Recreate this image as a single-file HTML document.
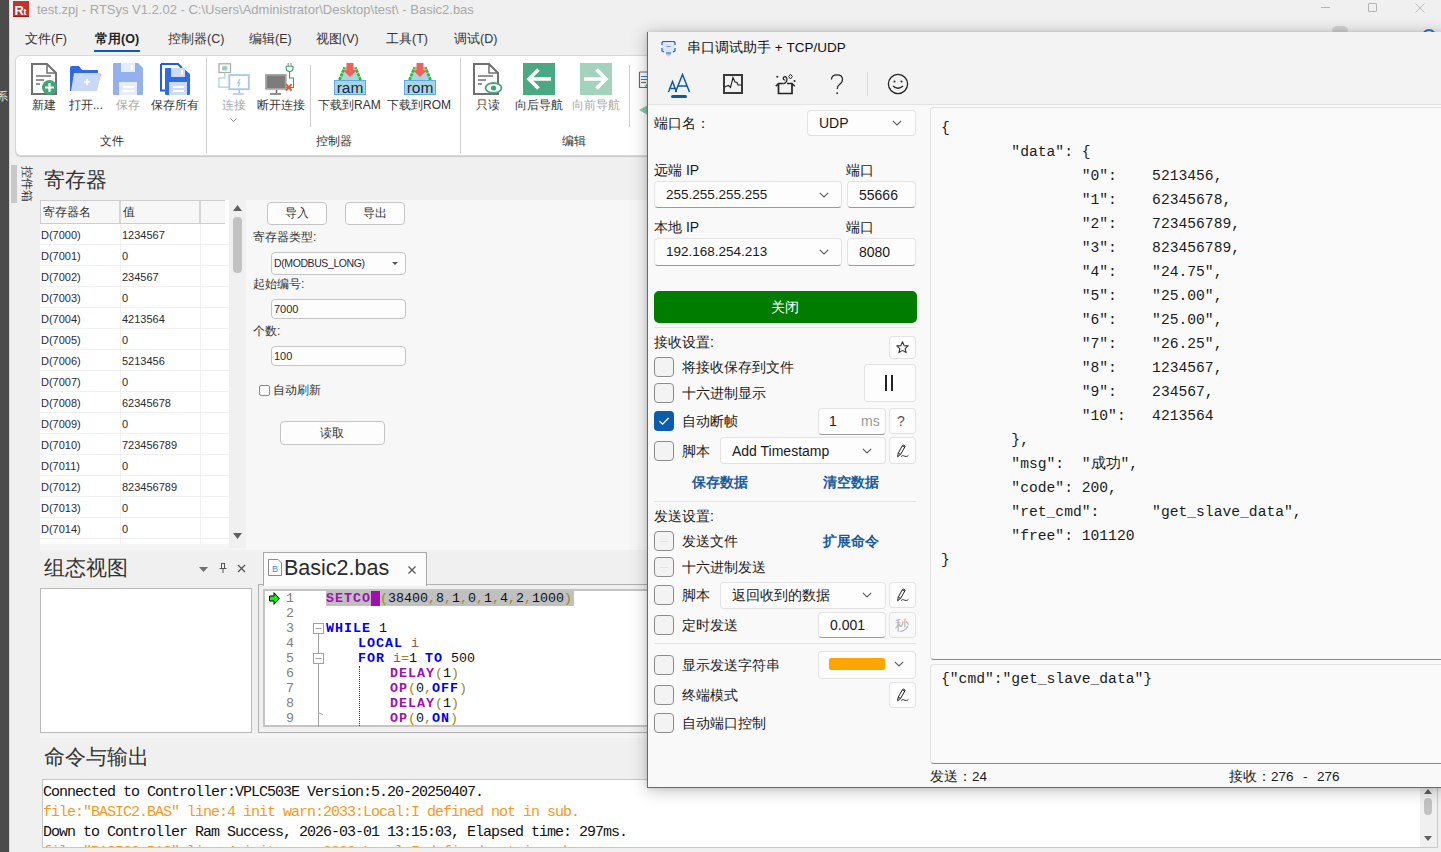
<!DOCTYPE html>
<html><head><meta charset="utf-8">
<style>
*{box-sizing:border-box;margin:0;padding:0}
html,body{width:1441px;height:852px;overflow:hidden}
body{position:relative;background:#f0f0f0;font-family:"Liberation Sans",sans-serif;font-size:12px;color:#1a1a1a}
.a{position:absolute}
.t{position:absolute;white-space:nowrap;line-height:1}
</style></head><body>
<!-- desktop strip -->
<div class="a" style="left:0;top:0;width:9px;height:852px;background:#4b4b4b"></div>
<div class="a" style="left:9px;top:0;width:1px;height:852px;background:#d8d8d8"></div>
<div class="a" style="left:0;top:90px;width:9px;height:14px;overflow:hidden"><div class="t" style="left:-3px;top:1px;font-size:11px;color:#e8e8e8">系</div></div>
<!-- title bar -->
<svg class="a" style="left:13px;top:1px" width="16" height="16" viewBox="0 0 16 16"><rect width="16" height="16" fill="#c8302a"/><rect y="15" width="16" height="1" fill="#9a1a10"/><text x="1.6" y="13.5" font-family="Liberation Sans" font-weight="bold" font-size="13" fill="#fff">R</text><text x="10.6" y="13.5" font-family="Liberation Sans" font-weight="bold" font-size="9" fill="#fff">t</text></svg>
<div class="t" style="left:37px;top:3px;font-size:13px;color:#a8a8a8">test.zpj - RTSys V1.2.02 - C:\Users\Administrator\Desktop\test\ - Basic2.bas</div>
<!-- menu -->
<div class="t" style="left:25px;top:33px;font-size:12.5px;color:#333">文件(F)</div>
<div class="t" style="left:95px;top:33px;font-size:12.5px;color:#222;font-weight:bold">常用(O)</div>
<div class="a" style="left:94px;top:50px;width:46px;height:2px;background:#0b5cb5"></div>
<div class="t" style="left:168px;top:33px;font-size:12.5px;color:#333">控制器(C)</div>
<div class="t" style="left:249px;top:33px;font-size:12.5px;color:#333">编辑(E)</div>
<div class="t" style="left:316px;top:33px;font-size:12.5px;color:#333">视图(V)</div>
<div class="t" style="left:386px;top:33px;font-size:12.5px;color:#333">工具(T)</div>
<div class="t" style="left:454px;top:33px;font-size:12.5px;color:#333">调试(D)</div>
<!-- ribbon -->
<div class="a" style="left:15px;top:55px;width:700px;height:101px;background:#fff;border:1px solid #d9d9d9;border-radius:6px;box-shadow:0 1px 1px #c8c8c8"></div>

<!-- 新建 -->
<svg class="a" style="left:31px;top:63px" width="26" height="32" viewBox="0 0 26 32">
<path d="M1 1H16L25 10V31H1Z" fill="#fff" stroke="#707070" stroke-width="2"/>
<path d="M16 1V10H25" fill="none" stroke="#707070" stroke-width="1.5"/>
<path d="M5 13H20M5 17H13M5 21H9" stroke="#707070" stroke-width="1.6"/>
<circle cx="18.5" cy="24.5" r="7.5" fill="#45a27b"/>
<path d="M18.5 20V29M14 24.5H23" stroke="#fff" stroke-width="2.2"/>
</svg>
<!-- 打开 -->
<svg class="a" style="left:70px;top:66px" width="32" height="26" viewBox="0 0 32 26">
<path d="M0 2Q0 0 2 0H9L12 4H28V10H0Z" fill="#2f6ae0"/>
<path d="M0 2V25H26L31 8H3Z" fill="#2f6ae0"/>
<path d="M4 7H31L27 25H1Z" fill="#c9d8f7"/>
<path d="M17 13V19M14 16H20" stroke="#fff" stroke-width="1.6"/>
</svg>
<!-- 保存 (disabled) -->
<svg class="a" style="left:113px;top:63px" width="30" height="32" viewBox="0 0 30 32">
<path d="M0 1Q0 0 1 0H25L30 5V31Q30 32 29 32H1Q0 32 0 31Z" fill="#94b1ee"/>
<rect x="8" y="0" width="14" height="9" fill="#e5ecfb"/>
<rect x="18" y="2" width="2" height="5" fill="#fff"/>
<rect x="6" y="19" width="18" height="13" fill="#e5ecfb"/>
<path d="M10 24H21M10 28H21" stroke="#fff" stroke-width="1.8"/>
</svg>
<!-- 保存所有 -->
<svg class="a" style="left:160px;top:63px" width="31" height="32" viewBox="0 0 31 32">
<path d="M1 1H18L22 5M1 1V27.5H5" fill="none" stroke="#1e5ee6" stroke-width="2"/>
<path d="M5 6Q5 5 6 5H23L30 11V31Q30 32 29 32H6Q5 32 5 31Z" fill="#2e6be4"/>
<rect x="11" y="5" width="14" height="9" fill="#cddbf7"/>
<rect x="21" y="6.5" width="2" height="5" fill="#fff"/>
<rect x="9" y="19" width="18" height="13" fill="#cddbf7"/>
<path d="M13 24H24M13 28H24" stroke="#fff" stroke-width="1.8"/>
</svg>
<!-- 连接 disabled -->
<svg class="a" style="left:218px;top:63px" width="33" height="32" viewBox="0 0 33 32">
<rect x="1" y="0.8" width="11.5" height="8.7" fill="#fff" stroke="#ababab" stroke-width="1.3"/>
<rect x="4" y="3" width="5.5" height="4.5" rx="1.5" fill="#9ccfb8"/>
<path d="M6.8 9.5V14.8H0.9V24.1H11" fill="none" stroke="#a8d8c0" stroke-width="1.2"/>
<rect x="11.3" y="12" width="19.5" height="14.2" fill="#fff" stroke="#a4c6f0" stroke-width="1.8"/>
<path d="M22 16L19.8 19.8H21.6L20.4 23.4" fill="none" stroke="#a4c6f0" stroke-width="1.3"/>
<path d="M21.2 27V30M14.8 31H25.8" stroke="#a4c6f0" stroke-width="1.6"/>
</svg>
<!-- 断开连接 -->
<svg class="a" style="left:265px;top:63px" width="33" height="32" viewBox="0 0 33 32">
<rect x="1" y="11.9" width="19.8" height="14" fill="#7c7c7c" stroke="#a5a5a5" stroke-width="1.8"/>
<path d="M11.5 27V30M5 31H16" stroke="#6e6e6e" stroke-width="1.6"/>
<path d="M23.2 0V3M26 0V3" stroke="#8a8a8a" stroke-width="1"/>
<path d="M21.2 3.2H28V5.6Q28 8.5 24.6 8.5Q21.2 8.5 21.2 5.6Z" fill="#fff" stroke="#3a9a70" stroke-width="1.1"/>
<path d="M24.6 8.5V15H28.5V24.5H21" fill="none" stroke="#3a9a70" stroke-width="1.1"/>
<path d="M21 21.2L26.5 27.6M26.5 21.2L21 27.6" stroke="#e05a36" stroke-width="1.9"/>
</svg>
<svg class="a" style="left:334px;top:63px" width="32" height="32" viewBox="0 0 32 32">
<path d="M4 17.5L9.5 4H22.5L28 17.5Z" fill="#a8d6dc"/>
<path d="M5.5 17L10.5 4.5M26.5 17L21.5 4.5" stroke="#22c022" stroke-width="2.6" stroke-dasharray="3 1"/>
<path d="M12.5 0H19.5V7H23L16 14L9 7H12.5Z" fill="#f0605c"/>
<rect x="0.5" y="17.5" width="31" height="14" fill="#a8d6dc" stroke="#60a8ee"/>
<text x="16" y="29.5" font-family="Liberation Sans" font-size="15.5" text-anchor="middle" fill="#15294f">ram</text>
</svg><svg class="a" style="left:404px;top:63px" width="32" height="32" viewBox="0 0 32 32">
<path d="M4 17.5L9.5 4H22.5L28 17.5Z" fill="#a8d6dc"/>
<path d="M5.5 17L10.5 4.5M26.5 17L21.5 4.5" stroke="#22c022" stroke-width="2.6" stroke-dasharray="3 1"/>
<path d="M12.5 0H19.5V7H23L16 14L9 7H12.5Z" fill="#f0605c"/>
<rect x="0.5" y="17.5" width="31" height="14" fill="#a8d6dc" stroke="#60a8ee"/>
<text x="16" y="29.5" font-family="Liberation Sans" font-size="15.5" text-anchor="middle" fill="#15294f">rom</text>
</svg>
<!-- 只读 -->
<svg class="a" style="left:473px;top:63px" width="30" height="32" viewBox="0 0 30 32">
<path d="M1 1H16L25 10V31H1Z" fill="#fff" stroke="#707070" stroke-width="2"/>
<path d="M16 1V10H25" fill="none" stroke="#707070" stroke-width="1.5"/>
<path d="M5 13H20M5 17H13M5 21H9" stroke="#707070" stroke-width="1.6"/>
<ellipse cx="20.5" cy="25" rx="8" ry="5" fill="#fff" stroke="#45a27b" stroke-width="1.8"/>
<circle cx="20.5" cy="25" r="2.6" fill="#45a27b"/>
</svg>
<!-- back/forward -->
<svg class="a" style="left:523px;top:63px" width="32" height="32" viewBox="0 0 32 32">
<rect width="32" height="32" fill="#4aa882"/>
<path d="M28 16H6M15.5 6.5L6 16L15.5 25.5" stroke="#fff" stroke-width="3.6" fill="none"/>
</svg>
<svg class="a" style="left:580px;top:63px" width="32" height="32" viewBox="0 0 32 32">
<rect width="32" height="32" fill="#a3d3bd"/>
<path d="M4 16H26M16.5 6.5L26 16L16.5 25.5" stroke="#fff" stroke-width="3.6" fill="none"/>
</svg>
<svg class="a" style="left:638px;top:71px" width="10" height="18" viewBox="0 0 10 18">
<path d="M1.5 1H10M1.5 1V16.5H10" fill="none" stroke="#6a6a6a" stroke-width="1.2"/>
<path d="M3 5.5H10M3 8.5H10" stroke="#3a7ad8" stroke-width="1.1"/><path d="M3 11.5H8" stroke="#6a6a6a" stroke-width="1.1"/>
<path d="M7.5 16.5Q8 13.5 10 13" fill="none" stroke="#2a9a60" stroke-width="1.1"/>
</svg>
<svg class="a" style="left:639px;top:105px" width="9" height="10" viewBox="0 0 9 10"><path d="M0 5L9 0V10Z" fill="#8cc8ac"/></svg>
<!-- labels -->
<div class="t" style="left:32px;top:99px;font-size:12px;color:#333">新建</div>
<div class="t" style="left:69px;top:99px;font-size:12px;color:#333">打开...</div>
<div class="t" style="left:116px;top:99px;font-size:12px;color:#a8a8a8">保存</div>
<div class="t" style="left:151px;top:99px;font-size:12px;color:#333">保存所有</div>
<div class="t" style="left:222px;top:99px;font-size:12px;color:#a8a8a8">连接</div>
<svg class="a" style="left:230px;top:118px" width="7" height="4" viewBox="0 0 7 4"><path d="M0.5 0.5L3.5 3.5L6.5 0.5" fill="none" stroke="#a0a0a0"/></svg>
<div class="t" style="left:257px;top:99px;font-size:12px;color:#333">断开连接</div>
<div class="t" style="left:318px;top:99px;font-size:12px;color:#333">下载到RAM</div>
<div class="t" style="left:387px;top:99px;font-size:12px;color:#333">下载到ROM</div>
<div class="t" style="left:476px;top:99px;font-size:12px;color:#333">只读</div>
<div class="t" style="left:515px;top:99px;font-size:12px;color:#333">向后导航</div>
<div class="t" style="left:572px;top:99px;font-size:12px;color:#a8a8a8">向前导航</div>
<div class="t" style="left:100px;top:135px;font-size:12px;color:#333">文件</div>
<div class="t" style="left:316px;top:135px;font-size:12px;color:#333">控制器</div>
<div class="t" style="left:562px;top:135px;font-size:12px;color:#333">编辑</div>
<!-- separators -->
<div class="a" style="left:206px;top:58px;width:1px;height:95px;background:#cfcfcf"></div>
<div class="a" style="left:310px;top:65px;width:1px;height:62px;background:#cfcfcf"></div>
<div class="a" style="left:460px;top:58px;width:1px;height:95px;background:#cfcfcf"></div>
<div class="a" style="left:629px;top:65px;width:1px;height:62px;background:#cfcfcf"></div>


<!-- side tab -->
<div class="a" style="left:11px;top:165px;width:6px;height:38px;background:#c8c8c8"></div>
<div class="a" style="left:20px;top:166px;width:14px;height:38px;writing-mode:vertical-rl;text-orientation:sideways;font-size:12px;line-height:14px;color:#333">控件箱</div>
<div class="t" style="left:44px;top:169px;font-size:21px;color:#333">寄存器</div>
<!-- register table -->
<div class="a" style="left:40px;top:200px;width:206px;height:350px;background:#f5f5f5"></div>
<div class="a" style="left:40px;top:200px;width:189px;height:344px;background:#fff;overflow:hidden">
<div class="a" style="left:0;top:0;width:185px;height:24px;background:#f7f7f7;border:1px solid #cdcdcd;border-right:none"></div>
<div class="a" style="left:79px;top:1px;width:2px;height:22px;background:#d6d6d6"></div>
<div class="a" style="left:159px;top:1px;width:2px;height:22px;background:#d6d6d6"></div>
<div class="t" style="left:3px;top:6px;font-size:12px;color:#333">寄存器名</div>
<div class="t" style="left:83px;top:6px;font-size:12px;color:#333">值</div>
<div class="a" style="left:0;top:24px;width:189px;height:21px;border-bottom:1px solid #f0f0f0"></div><div class="t" style="left:1px;top:30px;font-size:11px;color:#2a2a40">D(7000)</div><div class="t" style="left:82px;top:30px;font-size:11px;color:#2a2a2a">1234567</div><div class="a" style="left:0;top:45px;width:189px;height:21px;border-bottom:1px solid #f0f0f0"></div><div class="t" style="left:1px;top:51px;font-size:11px;color:#2a2a40">D(7001)</div><div class="t" style="left:82px;top:51px;font-size:11px;color:#2a2a2a">0</div><div class="a" style="left:0;top:66px;width:189px;height:21px;border-bottom:1px solid #f0f0f0"></div><div class="t" style="left:1px;top:72px;font-size:11px;color:#2a2a40">D(7002)</div><div class="t" style="left:82px;top:72px;font-size:11px;color:#2a2a2a">234567</div><div class="a" style="left:0;top:87px;width:189px;height:21px;border-bottom:1px solid #f0f0f0"></div><div class="t" style="left:1px;top:93px;font-size:11px;color:#2a2a40">D(7003)</div><div class="t" style="left:82px;top:93px;font-size:11px;color:#2a2a2a">0</div><div class="a" style="left:0;top:108px;width:189px;height:21px;border-bottom:1px solid #f0f0f0"></div><div class="t" style="left:1px;top:114px;font-size:11px;color:#2a2a40">D(7004)</div><div class="t" style="left:82px;top:114px;font-size:11px;color:#2a2a2a">4213564</div><div class="a" style="left:0;top:129px;width:189px;height:21px;border-bottom:1px solid #f0f0f0"></div><div class="t" style="left:1px;top:135px;font-size:11px;color:#2a2a40">D(7005)</div><div class="t" style="left:82px;top:135px;font-size:11px;color:#2a2a2a">0</div><div class="a" style="left:0;top:150px;width:189px;height:21px;border-bottom:1px solid #f0f0f0"></div><div class="t" style="left:1px;top:156px;font-size:11px;color:#2a2a40">D(7006)</div><div class="t" style="left:82px;top:156px;font-size:11px;color:#2a2a2a">5213456</div><div class="a" style="left:0;top:171px;width:189px;height:21px;border-bottom:1px solid #f0f0f0"></div><div class="t" style="left:1px;top:177px;font-size:11px;color:#2a2a40">D(7007)</div><div class="t" style="left:82px;top:177px;font-size:11px;color:#2a2a2a">0</div><div class="a" style="left:0;top:192px;width:189px;height:21px;border-bottom:1px solid #f0f0f0"></div><div class="t" style="left:1px;top:198px;font-size:11px;color:#2a2a40">D(7008)</div><div class="t" style="left:82px;top:198px;font-size:11px;color:#2a2a2a">62345678</div><div class="a" style="left:0;top:213px;width:189px;height:21px;border-bottom:1px solid #f0f0f0"></div><div class="t" style="left:1px;top:219px;font-size:11px;color:#2a2a40">D(7009)</div><div class="t" style="left:82px;top:219px;font-size:11px;color:#2a2a2a">0</div><div class="a" style="left:0;top:234px;width:189px;height:21px;border-bottom:1px solid #f0f0f0"></div><div class="t" style="left:1px;top:240px;font-size:11px;color:#2a2a40">D(7010)</div><div class="t" style="left:82px;top:240px;font-size:11px;color:#2a2a2a">723456789</div><div class="a" style="left:0;top:255px;width:189px;height:21px;border-bottom:1px solid #f0f0f0"></div><div class="t" style="left:1px;top:261px;font-size:11px;color:#2a2a40">D(7011)</div><div class="t" style="left:82px;top:261px;font-size:11px;color:#2a2a2a">0</div><div class="a" style="left:0;top:276px;width:189px;height:21px;border-bottom:1px solid #f0f0f0"></div><div class="t" style="left:1px;top:282px;font-size:11px;color:#2a2a40">D(7012)</div><div class="t" style="left:82px;top:282px;font-size:11px;color:#2a2a2a">823456789</div><div class="a" style="left:0;top:297px;width:189px;height:21px;border-bottom:1px solid #f0f0f0"></div><div class="t" style="left:1px;top:303px;font-size:11px;color:#2a2a40">D(7013)</div><div class="t" style="left:82px;top:303px;font-size:11px;color:#2a2a2a">0</div><div class="a" style="left:0;top:318px;width:189px;height:21px;border-bottom:1px solid #f0f0f0"></div><div class="t" style="left:1px;top:324px;font-size:11px;color:#2a2a40">D(7014)</div><div class="t" style="left:82px;top:324px;font-size:11px;color:#2a2a2a">0</div><div class="a" style="left:0;top:339px;width:189px;height:21px;border-bottom:1px solid #f0f0f0"></div><div class="t" style="left:1px;top:345px;font-size:11px;color:#2a2a40">D(7015)</div><div class="t" style="left:82px;top:345px;font-size:11px;color:#2a2a2a">0</div>
<div class="a" style="left:80px;top:24px;width:1px;height:330px;background:#f0f0f0"></div>
<div class="a" style="left:160px;top:24px;width:1px;height:330px;background:#f0f0f0"></div>
</div>
<!-- scrollbar -->
<div class="a" style="left:229px;top:200px;width:17px;height:348px;background:#f0f0f0"></div>
<svg class="a" style="left:233px;top:205px" width="9" height="6" viewBox="0 0 9 6"><path d="M0 6L4.5 0L9 6Z" fill="#606060"/></svg>
<div class="a" style="left:233px;top:217px;width:9px;height:56px;background:#c2c2c2;border-radius:4px"></div>
<svg class="a" style="left:233px;top:533px" width="9" height="6" viewBox="0 0 9 6"><path d="M0 0L4.5 6L9 0Z" fill="#606060"/></svg>
<!-- right pane -->
<div class="a" style="left:246px;top:200px;width:402px;height:350px;background:#f7f7f7"></div>
<div class="a" style="left:267px;top:202px;width:60px;height:23px;background:#fdfdfd;border:1px solid #c4c4c4;border-radius:4px"></div>
<div class="t" style="left:285px;top:207px;font-size:12px;color:#333">导入</div>
<div class="a" style="left:345px;top:202px;width:60px;height:23px;background:#fdfdfd;border:1px solid #c4c4c4;border-radius:4px"></div>
<div class="t" style="left:363px;top:207px;font-size:12px;color:#333">导出</div>
<div class="t" style="left:253px;top:231px;font-size:12px;color:#333">寄存器类型:</div>
<div class="a" style="left:271px;top:252px;width:135px;height:23px;background:#fdfdfd;border:1px solid #c4c4c4;border-radius:4px"></div>
<div class="t" style="left:274px;top:258px;font-size:10.5px;letter-spacing:-0.4px;color:#2a2a40">D(MODBUS_LONG)</div>
<svg class="a" style="left:392px;top:262px" width="6" height="3" viewBox="0 0 6 3"><path d="M0 0H6L3 3Z" fill="#555"/></svg>
<div class="t" style="left:253px;top:278px;font-size:12px;color:#333">起始编号:</div>
<div class="a" style="left:271px;top:299px;width:135px;height:20px;background:#fdfdfd;border:1px solid #c4c4c4;border-radius:4px"></div>
<div class="t" style="left:274px;top:304px;font-size:11px;color:#2a2a2a">7000</div>
<div class="t" style="left:253px;top:325px;font-size:12px;color:#333">个数:</div>
<div class="a" style="left:271px;top:346px;width:135px;height:20px;background:#fdfdfd;border:1px solid #c4c4c4;border-radius:4px"></div>
<div class="t" style="left:274px;top:351px;font-size:11px;color:#2a2a2a">100</div>
<div class="a" style="left:259px;top:385px;width:11px;height:11px;background:#fff;border:1px solid #8a8a8a;border-radius:2px"></div>
<div class="t" style="left:273px;top:384px;font-size:12px;color:#333">自动刷新</div>
<div class="a" style="left:280px;top:421px;width:105px;height:24px;background:#fdfdfd;border:1px solid #c4c4c4;border-radius:4px"></div>
<div class="t" style="left:320px;top:427px;font-size:12px;color:#333">读取</div>
<!-- bottom panes -->
<div class="t" style="left:44px;top:557px;font-size:21px;color:#333">组态视图</div>
<svg class="a" style="left:199px;top:567px" width="9" height="5" viewBox="0 0 9 5"><path d="M0 0H9L4.5 5Z" fill="#707070"/></svg>
<svg class="a" style="left:219px;top:563px" width="8" height="10" viewBox="0 0 8 10"><path d="M2 0.5H6M2.5 0.5V5M5.5 0.5V5M0.5 5.5H7.5M4 5.5V10" stroke="#555" fill="none"/></svg>
<svg class="a" style="left:237px;top:564px" width="9" height="9" viewBox="0 0 9 9"><path d="M1 1L8 8M8 1L1 8" stroke="#555" stroke-width="1.3"/></svg>
<div class="a" style="left:40px;top:588px;width:212px;height:145px;background:#fff;border:1px solid #b9b9b9"></div>
<!-- editor -->
<div class="a" style="left:258px;top:584px;width:400px;height:149px;background:#f0f0f0;border:1px solid #b0b0b0"></div>
<div class="a" style="left:263px;top:589px;width:400px;height:138px;background:#fff;border:2px solid #c4c4c4;border-right:none"></div>
<div class="a" style="left:263px;top:552px;width:164px;height:34px;background:#fcfcfc;border:1px solid #a9a9a9;border-bottom:none"></div>
<svg class="a" style="left:268px;top:559px" width="14" height="17" viewBox="0 0 14 17"><path d="M0.5 0.5H10L13.5 4V16.5H0.5Z" fill="#fff" stroke="#8a8a8a"/><text x="7" y="13" font-family="Liberation Sans" font-size="9" fill="#3a8ad8" text-anchor="middle">B</text></svg>
<div class="t" style="left:284px;top:558px;font-size:21.5px;color:#2a2a2a">Basic2.bas</div>
<svg class="a" style="left:408px;top:566px" width="8" height="8" viewBox="0 0 8 8"><path d="M0.5 0.5L7.5 7.5M7.5 0.5L0.5 7.5" stroke="#555" stroke-width="1.2"/></svg>
<div class="a" style="left:265px;top:591px;width:383px;height:136px;overflow:hidden"><div class="a" style="left:61px;top:0;width:248px;height:15px;background:#c0c0c0"></div><svg class="a" style="left:4px;top:1px" width="11" height="13" viewBox="0 0 11 13"><path d="M0.5 4H5V0.7L10.3 6.5L5 12.3V9H0.5Z" fill="#22e022" stroke="#000" stroke-width="1"/></svg><svg class="a" style="left:48px;top:32px" width="11" height="105" viewBox="0 0 11 105"><rect x="0.5" y="0.5" width="10" height="10" fill="#fff" stroke="#a0a0a0"/><path d="M2.5 5.5H8.5" stroke="#a0a0a0"/><path d="M5.5 11V30" stroke="#a0a0a0"/><rect x="0.5" y="30.5" width="10" height="10" fill="#fff" stroke="#a0a0a0"/><path d="M2.5 35.5H8.5" stroke="#a0a0a0"/><path d="M5.5 41V105" stroke="#a0a0a0"/><path d="M6 90Q8 90 10 92" stroke="#a0a0a0" fill="none"/></svg><div class="a" style="left:94px;top:75px;width:0;height:62px;border-left:1px dotted #333"></div><div class="t" style="left:21px;top:0px;height:15px;line-height:15px;font-family:'Liberation Mono',monospace;font-size:13.33px;color:#808080">1</div><div class="t" style="left:61px;top:0px;height:15px;line-height:15px;font-family:'Liberation Mono',monospace;font-size:13.33px;color:#111;white-space:pre"><b style="color:#a010b0;letter-spacing:1px">SETCO<span style="background:#a010b0">M</span></b><span style="color:#9a8a10">(</span>38400<span style="color:#9a8a10">,</span>8<span style="color:#9a8a10">,</span>1<span style="color:#9a8a10">,</span>0<span style="color:#9a8a10">,</span>1<span style="color:#9a8a10">,</span>4<span style="color:#9a8a10">,</span>2<span style="color:#9a8a10">,</span>1000<span style="color:#9a8a10">)</span></div><div class="t" style="left:21px;top:15px;height:15px;line-height:15px;font-family:'Liberation Mono',monospace;font-size:13.33px;color:#808080">2</div><div class="t" style="left:21px;top:30px;height:15px;line-height:15px;font-family:'Liberation Mono',monospace;font-size:13.33px;color:#808080">3</div><div class="t" style="left:61px;top:30px;height:15px;line-height:15px;font-family:'Liberation Mono',monospace;font-size:13.33px;color:#111;white-space:pre"><b style="color:#0000f0;letter-spacing:1px">WHILE</b> 1</div><div class="t" style="left:21px;top:45px;height:15px;line-height:15px;font-family:'Liberation Mono',monospace;font-size:13.33px;color:#808080">4</div><div class="t" style="left:61px;top:45px;height:15px;line-height:15px;font-family:'Liberation Mono',monospace;font-size:13.33px;color:#111;white-space:pre">    <b style="color:#0000f0;letter-spacing:1px">LOCAL</b> <span style="color:#8a5a5a">i</span></div><div class="t" style="left:21px;top:60px;height:15px;line-height:15px;font-family:'Liberation Mono',monospace;font-size:13.33px;color:#808080">5</div><div class="t" style="left:61px;top:60px;height:15px;line-height:15px;font-family:'Liberation Mono',monospace;font-size:13.33px;color:#111;white-space:pre">    <b style="color:#0000f0;letter-spacing:1px">FOR</b> <span style="color:#8a5a5a">i</span><span style="color:#9a8a10">=</span>1 <b style="color:#0000f0;letter-spacing:1px">TO</b> 500</div><div class="t" style="left:21px;top:75px;height:15px;line-height:15px;font-family:'Liberation Mono',monospace;font-size:13.33px;color:#808080">6</div><div class="t" style="left:61px;top:75px;height:15px;line-height:15px;font-family:'Liberation Mono',monospace;font-size:13.33px;color:#111;white-space:pre">        <b style="color:#a010b0;letter-spacing:1px">DELAY</b><span style="color:#9a8a10">(</span>1<span style="color:#9a8a10">)</span></div><div class="t" style="left:21px;top:90px;height:15px;line-height:15px;font-family:'Liberation Mono',monospace;font-size:13.33px;color:#808080">7</div><div class="t" style="left:61px;top:90px;height:15px;line-height:15px;font-family:'Liberation Mono',monospace;font-size:13.33px;color:#111;white-space:pre">        <b style="color:#a010b0;letter-spacing:1px">OP</b><span style="color:#9a8a10">(</span>0<span style="color:#9a8a10">,</span><b style="color:#0000f0;letter-spacing:1px">OFF</b><span style="color:#9a8a10">)</span></div><div class="t" style="left:21px;top:105px;height:15px;line-height:15px;font-family:'Liberation Mono',monospace;font-size:13.33px;color:#808080">8</div><div class="t" style="left:61px;top:105px;height:15px;line-height:15px;font-family:'Liberation Mono',monospace;font-size:13.33px;color:#111;white-space:pre">        <b style="color:#a010b0;letter-spacing:1px">DELAY</b><span style="color:#9a8a10">(</span>1<span style="color:#9a8a10">)</span></div><div class="t" style="left:21px;top:120px;height:15px;line-height:15px;font-family:'Liberation Mono',monospace;font-size:13.33px;color:#808080">9</div><div class="t" style="left:61px;top:120px;height:15px;line-height:15px;font-family:'Liberation Mono',monospace;font-size:13.33px;color:#111;white-space:pre">        <b style="color:#a010b0;letter-spacing:1px">OP</b><span style="color:#9a8a10">(</span>0<span style="color:#9a8a10">,</span><b style="color:#0000f0;letter-spacing:1px">ON</b><span style="color:#9a8a10">)</span></div></div>
<!-- console -->
<div class="a" style="left:40px;top:734px;width:608px;height:4px;background:#f5f5f5"></div>
<div class="t" style="left:44px;top:746px;font-size:21px;color:#333">命令与输出</div>
<div class="a" style="left:42px;top:779px;width:1396px;height:69px;background:#fff;border:1px solid #c8c8c8;overflow:hidden">
<pre style="position:absolute;left:0px;top:3px;font-family:'Liberation Mono',monospace;font-size:15px;letter-spacing:-1px;line-height:20px;color:#111">Connected to Controller:VPLC503E Version:5.20-20250407.
<span style="color:#f39a1e">file:"BASIC2.BAS" line:4 init warn:2033:Local:I defined not in sub.</span>
Down to Controller Ram Success, 2026-03-01 13:15:03, Elapsed time: 297ms.
<span style="color:#f39a1e">file:"BASIC2.BAS" line:4 init warn:2033:Local:I defined not in sub.</span></pre>
</div>
<div class="a" style="left:1420px;top:780px;width:17px;height:67px;background:#f0f0f0"></div>
<svg class="a" style="left:1424px;top:789px" width="8" height="5" viewBox="0 0 8 5"><path d="M0 5L4 0L8 5Z" fill="#606060"/></svg>
<div class="a" style="left:1424px;top:798px;width:8px;height:17px;background:#c2c2c2;border-radius:4px"></div>
<svg class="a" style="left:1424px;top:836px" width="8" height="5" viewBox="0 0 8 5"><path d="M0 0L4 5L8 0Z" fill="#606060"/></svg>

<div class="a" style="left:1321px;top:7px;width:9px;height:1px;background:#b4b4b4"></div>
<div class="a" style="left:1368px;top:3px;width:9px;height:9px;border:1px solid #b4b4b4;border-radius:1px"></div>
<svg class="a" style="left:1415px;top:3px" width="10" height="10" viewBox="0 0 10 10"><path d="M0.5 0.5L9.5 9.5M9.5 0.5L0.5 9.5" stroke="#b4b4b4" stroke-width="0.9"/></svg>
<div class="a" style="left:1332px;top:26px;width:16px;height:10px;background:#d2d2d2;border-radius:5px"></div>
<div class="a" style="left:1422px;top:29px;width:14px;height:14px;border:2px solid #2a78d0;border-radius:50%"></div>
<!-- serial window -->
<div class="a" style="left:647px;top:32px;width:800px;height:756px;background:#f9f9f9;border-left:1px solid #6a6a6a;border-bottom:1px solid #6a6a6a;box-shadow:0 0 4px rgba(0,0,0,0.12),0 2px 16px rgba(0,0,0,0.26)"></div>
<div class="a" style="left:648px;top:32px;width:793px;height:72px;background:#f3f3f3"></div>
<div class="a" style="left:648px;top:104px;width:793px;height:1px;background:#e3e3e3"></div>
<svg class="a" style="left:661px;top:40px" width="15" height="17" viewBox="0 0 15 17">
<path d="M2 1.5H13L14 2.5V11L12 12.5H3L1 11V2.5Z" fill="#dde7f8"/>
<path d="M1 5V2.5L2 1.5H13L14 2.5V5M1 8V11L3 12M14 8V11L12 12" fill="none" stroke="#2a5ab8" stroke-width="1.2"/>
<path d="M5.5 6.5H9.5" stroke="#7090d0" stroke-width="1"/>
<rect x="5" y="12" width="5" height="2.5" fill="#7a9ad8"/>
<path d="M5.5 14.5H9.5L7.5 16.8Z" fill="#b8c8f0"/>
</svg>
<div class="t" style="left:687px;top:41px;font-size:13.5px;color:#111">串口调试助手 + TCP/UDP</div>
<!-- toolbar icons -->
<svg class="a" style="left:667px;top:73px" width="24" height="26" viewBox="0 0 24 26">
<path d="M1.5 19L5.5 8.5L9.5 19M2.8 15.5H8.2" fill="none" stroke="#0a5aa8" stroke-width="1.5"/>
<path d="M8.5 19L15.5 1.5L22.5 19M11 13H20" fill="none" stroke="#0a5aa8" stroke-width="1.5"/>
<rect x="4" y="22" width="16" height="3" rx="1.5" fill="#0a5aa8"/>
</svg>
<svg class="a" style="left:723px;top:74px" width="20" height="20" viewBox="0 0 20 20">
<rect x="1" y="1" width="18" height="18" fill="none" stroke="#3a3a3a" stroke-width="2"/>
<path d="M1.5 13L4 12L5.5 11.5L7.5 13.5L10 3.5L12 8L14 8.5L15 11L18.5 11" fill="none" stroke="#222" stroke-width="1.1"/>
</svg>
<svg class="a" style="left:775px;top:74px" width="22" height="21" viewBox="0 0 22 21">
<path d="M3.5 10V19.5H17V10" fill="none" stroke="#222" stroke-width="1.7"/>
<path d="M0.8 12.2L3.5 9.5H8.5M12 9.5H17L19.7 12.2" fill="none" stroke="#222" stroke-width="1.5"/>
<path d="M8.5 10Q12.8 8 11.8 4.2Q10.6 1.6 8.6 3.2Q7.4 5.8 10.2 6.2" fill="none" stroke="#222" stroke-width="1.3"/>
<path d="M15.5 0.3L17.4 2.6L15.5 4.9L13.6 2.6Z" fill="none" stroke="#222" stroke-width="1"/>
<circle cx="2.3" cy="2.8" r="1" fill="#222"/><circle cx="19.5" cy="7" r="1" fill="#222"/>
</svg>
<svg class="a" style="left:830px;top:74px" width="15" height="21" viewBox="0 0 15 21">
<path d="M1.5 5.5Q1.5 0.8 7 0.8Q12.5 0.8 12.5 5.5Q12.5 8.5 9.5 10.5Q7.2 12 7.2 15" fill="none" stroke="#222" stroke-width="1.2"/>
<circle cx="7.2" cy="19.2" r="0.9" fill="#222"/>
</svg>
<div class="a" style="left:867px;top:72px;width:1px;height:24px;background:#dcdcdc"></div>
<svg class="a" style="left:887px;top:73px" width="22" height="22" viewBox="0 0 22 22">
<circle cx="11" cy="11" r="9.6" fill="none" stroke="#222" stroke-width="1.3"/>
<circle cx="7.5" cy="8.5" r="1" fill="#222"/><circle cx="14.5" cy="8.5" r="1" fill="#222"/>
<path d="M6 13Q11 17.5 16 13" fill="none" stroke="#222" stroke-width="1.2"/>
</svg>
<div class="t" style="left:654px;top:116px;height:14px;line-height:14px;font-size:14px;color:#1a1a1a">端口名：</div><div class="a" style="left:807px;top:110px;width:109px;height:26px;background:#fdfdfd;border:1px solid #e3e3e3;border-bottom-color:#e0e0e0;border-radius:4px"></div><div class="t" style="left:819px;top:116px;height:14px;line-height:14px;font-size:14px;color:#1a1a1a">UDP</div><svg class="a" style="left:892px;top:120px" width="10" height="6" viewBox="0 0 10 6"><path d="M0.8 0.8L5 5L9.2 0.8" fill="none" stroke="#5a5a5a" stroke-width="1.1"/></svg><div class="t" style="left:654px;top:163px;height:14px;line-height:14px;font-size:14px;color:#1a1a1a">远端 IP</div><div class="t" style="left:846px;top:163px;height:14px;line-height:14px;font-size:14px;color:#1a1a1a">端口</div><div class="a" style="left:654px;top:181px;width:188px;height:27px;background:#fdfdfd;border:1px solid #e3e3e3;border-bottom-color:#9a9a9a;border-radius:4px"></div><div class="t" style="left:666px;top:188px;height:14px;line-height:14px;font-size:13.5px;color:#1a1a1a">255.255.255.255</div><svg class="a" style="left:819px;top:192px" width="10" height="6" viewBox="0 0 10 6"><path d="M0.8 0.8L5 5L9.2 0.8" fill="none" stroke="#5a5a5a" stroke-width="1.1"/></svg><div class="a" style="left:847px;top:181px;width:69px;height:27px;background:#fdfdfd;border:1px solid #e3e3e3;border-bottom-color:#9a9a9a;border-radius:4px"></div><div class="t" style="left:859px;top:188px;height:14px;line-height:14px;font-size:14px;color:#1a1a1a">55666</div><div class="t" style="left:654px;top:220px;height:14px;line-height:14px;font-size:14px;color:#1a1a1a">本地 IP</div><div class="t" style="left:846px;top:220px;height:14px;line-height:14px;font-size:14px;color:#1a1a1a">端口</div><div class="a" style="left:654px;top:238px;width:188px;height:28px;background:#fdfdfd;border:1px solid #e3e3e3;border-bottom-color:#9a9a9a;border-radius:4px"></div><div class="t" style="left:666px;top:245px;height:14px;line-height:14px;font-size:13.5px;color:#1a1a1a">192.168.254.213</div><svg class="a" style="left:819px;top:249px" width="10" height="6" viewBox="0 0 10 6"><path d="M0.8 0.8L5 5L9.2 0.8" fill="none" stroke="#5a5a5a" stroke-width="1.1"/></svg><div class="a" style="left:847px;top:238px;width:69px;height:28px;background:#fdfdfd;border:1px solid #e3e3e3;border-bottom-color:#9a9a9a;border-radius:4px"></div><div class="t" style="left:859px;top:245px;height:14px;line-height:14px;font-size:14px;color:#1a1a1a">8080</div><div class="a" style="left:654px;top:291px;width:263px;height:32px;background:#007c00;border-radius:5px"></div><div class="t" style="left:771px;top:300px;height:14px;line-height:14px;font-size:14px;color:#fff">关闭</div><div class="a" style="left:654px;top:327px;width:262px;height:1px;background:#e3e3e3"></div><div class="t" style="left:654px;top:335px;height:14px;line-height:14px;font-size:14px;color:#1a1a1a">接收设置:</div><div class="a" style="left:889px;top:336px;width:27px;height:23px;background:#fdfdfd;border:1px solid #e3e3e3;border-bottom-color:#e0e0e0;border-radius:4px"></div><svg class="a" style="left:896px;top:341px" width="13" height="13" viewBox="0 0 13 13"><path d="M6.5 0.8L8.1 4.6L12.2 4.9L9.1 7.6L10.1 11.6L6.5 9.4L2.9 11.6L3.9 7.6L0.8 4.9L4.9 4.6Z" fill="none" stroke="#333" stroke-width="1.1" stroke-linejoin="round"/></svg><div class="a" style="left:864px;top:364px;width:52px;height:38px;background:#fdfdfd;border:1px solid #e3e3e3;border-bottom-color:#e0e0e0;border-radius:4px"></div><div class="a" style="left:885px;top:375px;width:2px;height:16px;background:#222"></div><div class="a" style="left:891px;top:375px;width:2px;height:16px;background:#222"></div><div class="a" style="left:654px;top:357px;width:20px;height:20px;background:#f3f3f3;border:1px solid #8c8c8c;border-radius:4px"></div><div class="t" style="left:682px;top:360px;height:14px;line-height:14px;font-size:14px;color:#1a1a1a">将接收保存到文件</div><div class="a" style="left:654px;top:383px;width:20px;height:20px;background:#f3f3f3;border:1px solid #8c8c8c;border-radius:4px"></div><div class="t" style="left:682px;top:386px;height:14px;line-height:14px;font-size:14px;color:#1a1a1a">十六进制显示</div><div class="a" style="left:654px;top:411px;width:20px;height:20px;background:#0b5cab;border-radius:4px"></div><svg class="a" style="left:654px;top:411px" width="20" height="20" viewBox="0 0 20 20"><path d="M5.5 10.2L8.6 13.2L14.6 7" fill="none" stroke="#fff" stroke-width="1.3"/></svg><div class="t" style="left:682px;top:414px;height:14px;line-height:14px;font-size:14px;color:#1a1a1a">自动断帧</div><div class="a" style="left:818px;top:408px;width:68px;height:27px;background:#fdfdfd;border:1px solid #e3e3e3;border-bottom-color:#9a9a9a;border-radius:4px"></div><div class="t" style="left:829px;top:414px;height:14px;line-height:14px;font-size:14px;color:#1a1a1a">1</div><div class="t" style="left:861px;top:414px;height:14px;line-height:14px;font-size:14px;color:#9a9a9a">ms</div><div class="a" style="left:889px;top:408px;width:27px;height:26px;background:#fdfdfd;border:1px solid #e3e3e3;border-bottom-color:#e0e0e0;border-radius:4px"></div><div class="t" style="left:897px;top:414px;height:14px;line-height:14px;font-size:14px;color:#555">?</div><div class="a" style="left:654px;top:441px;width:20px;height:20px;background:#f3f3f3;border:1px solid #8c8c8c;border-radius:4px"></div><div class="t" style="left:682px;top:444px;height:14px;line-height:14px;font-size:14px;color:#1a1a1a">脚本</div><div class="a" style="left:720px;top:437px;width:166px;height:27px;background:#fdfdfd;border:1px solid #e3e3e3;border-bottom-color:#e0e0e0;border-radius:4px"></div><div class="t" style="left:732px;top:444px;height:14px;line-height:14px;font-size:14px;color:#1a1a1a">Add Timestamp</div><svg class="a" style="left:862px;top:448px" width="10" height="6" viewBox="0 0 10 6"><path d="M0.8 0.8L5 5L9.2 0.8" fill="none" stroke="#5a5a5a" stroke-width="1.1"/></svg><div class="a" style="left:889px;top:437px;width:27px;height:27px;background:#fdfdfd;border:1px solid #e3e3e3;border-bottom-color:#e0e0e0;border-radius:4px"></div><svg class="a" style="left:896px;top:444px" width="14" height="14" viewBox="0 0 14 14"><path d="M1.6 12.8L2.2 9.2L6.4 1.8Q7.4 0.6 8.6 1.6Q9.2 2.4 8.8 3L4.6 10.4L1.6 12.8M2.2 9.2L4.6 10.4M6.4 1.8L8.8 3" fill="none" stroke="#222" stroke-width="1"/><path d="M5 12.6Q6.2 11.2 7.6 11.8Q9 12.6 10.4 12.4Q11.6 12.3 12.4 11.4" fill="none" stroke="#222" stroke-width="0.9"/></svg><div class="t" style="left:692px;top:475px;height:14px;line-height:14px;font-size:14px;font-weight:600;color:#1b5c9c">保存数据</div><div class="t" style="left:823px;top:475px;height:14px;line-height:14px;font-size:14px;font-weight:600;color:#1b5c9c">清空数据</div><div class="a" style="left:654px;top:501px;width:262px;height:1px;background:#e3e3e3"></div><div class="t" style="left:654px;top:509px;height:14px;line-height:14px;font-size:14px;color:#1a1a1a">发送设置:</div><div class="a" style="left:654px;top:531px;width:20px;height:20px;background:#f3f3f3;border:1px solid #8c8c8c;border-radius:4px"></div><div class="a" style="left:660px;top:541px;width:8px;height:1px;background:#e2e2e2"></div><div class="t" style="left:682px;top:534px;height:14px;line-height:14px;font-size:14px;color:#1a1a1a">发送文件</div><div class="t" style="left:823px;top:534px;height:14px;line-height:14px;font-size:14px;font-weight:600;color:#1b5c9c">扩展命令</div><div class="a" style="left:654px;top:557px;width:20px;height:20px;background:#f3f3f3;border:1px solid #8c8c8c;border-radius:4px"></div><div class="a" style="left:660px;top:567px;width:8px;height:1px;background:#e2e2e2"></div><div class="t" style="left:682px;top:560px;height:14px;line-height:14px;font-size:14px;color:#1a1a1a">十六进制发送</div><div class="a" style="left:654px;top:585px;width:20px;height:20px;background:#f3f3f3;border:1px solid #8c8c8c;border-radius:4px"></div><div class="t" style="left:682px;top:588px;height:14px;line-height:14px;font-size:14px;color:#1a1a1a">脚本</div><div class="a" style="left:720px;top:582px;width:166px;height:27px;background:#fdfdfd;border:1px solid #e3e3e3;border-bottom-color:#e0e0e0;border-radius:4px"></div><div class="t" style="left:732px;top:588px;height:14px;line-height:14px;font-size:14px;color:#1a1a1a">返回收到的数据</div><svg class="a" style="left:862px;top:592px" width="10" height="6" viewBox="0 0 10 6"><path d="M0.8 0.8L5 5L9.2 0.8" fill="none" stroke="#5a5a5a" stroke-width="1.1"/></svg><div class="a" style="left:889px;top:582px;width:27px;height:26px;background:#fdfdfd;border:1px solid #e3e3e3;border-bottom-color:#e0e0e0;border-radius:4px"></div><svg class="a" style="left:896px;top:588px" width="14" height="14" viewBox="0 0 14 14"><path d="M1.6 12.8L2.2 9.2L6.4 1.8Q7.4 0.6 8.6 1.6Q9.2 2.4 8.8 3L4.6 10.4L1.6 12.8M2.2 9.2L4.6 10.4M6.4 1.8L8.8 3" fill="none" stroke="#222" stroke-width="1"/><path d="M5 12.6Q6.2 11.2 7.6 11.8Q9 12.6 10.4 12.4Q11.6 12.3 12.4 11.4" fill="none" stroke="#222" stroke-width="0.9"/></svg><div class="a" style="left:654px;top:615px;width:20px;height:20px;background:#f3f3f3;border:1px solid #8c8c8c;border-radius:4px"></div><div class="t" style="left:682px;top:618px;height:14px;line-height:14px;font-size:14px;color:#1a1a1a">定时发送</div><div class="a" style="left:818px;top:612px;width:68px;height:26px;background:#fdfdfd;border:1px solid #e3e3e3;border-bottom-color:#9a9a9a;border-radius:4px"></div><div class="t" style="left:830px;top:618px;height:14px;line-height:14px;font-size:14px;color:#1a1a1a">0.001</div><div class="a" style="left:889px;top:612px;width:27px;height:26px;background:#f9f9f9;border:1px solid #e3e3e3;border-bottom-color:#e0e0e0;border-radius:4px"></div><div class="t" style="left:895px;top:618px;height:14px;line-height:14px;font-size:14px;color:#b0b0b0">秒</div><div class="a" style="left:654px;top:643px;width:262px;height:1px;background:#e3e3e3"></div><div class="a" style="left:654px;top:655px;width:20px;height:20px;background:#f3f3f3;border:1px solid #8c8c8c;border-radius:4px"></div><div class="t" style="left:682px;top:658px;height:14px;line-height:14px;font-size:14px;color:#1a1a1a">显示发送字符串</div><div class="a" style="left:818px;top:651px;width:98px;height:28px;background:#fdfdfd;border:1px solid #e3e3e3;border-bottom-color:#e0e0e0;border-radius:4px"></div><div class="a" style="left:829px;top:658px;width:56px;height:12px;background:#ffa500;border-radius:2px"></div><svg class="a" style="left:894px;top:661px" width="10" height="6" viewBox="0 0 10 6"><path d="M0.8 0.8L5 5L9.2 0.8" fill="none" stroke="#5a5a5a" stroke-width="1.1"/></svg><div class="a" style="left:654px;top:685px;width:20px;height:20px;background:#f3f3f3;border:1px solid #8c8c8c;border-radius:4px"></div><div class="t" style="left:682px;top:688px;height:14px;line-height:14px;font-size:14px;color:#1a1a1a">终端模式</div><div class="a" style="left:889px;top:682px;width:27px;height:26px;background:#fdfdfd;border:1px solid #e3e3e3;border-bottom-color:#e0e0e0;border-radius:4px"></div><svg class="a" style="left:896px;top:688px" width="14" height="14" viewBox="0 0 14 14"><path d="M1.6 12.8L2.2 9.2L6.4 1.8Q7.4 0.6 8.6 1.6Q9.2 2.4 8.8 3L4.6 10.4L1.6 12.8M2.2 9.2L4.6 10.4M6.4 1.8L8.8 3" fill="none" stroke="#222" stroke-width="1"/><path d="M5 12.6Q6.2 11.2 7.6 11.8Q9 12.6 10.4 12.4Q11.6 12.3 12.4 11.4" fill="none" stroke="#222" stroke-width="0.9"/></svg><div class="a" style="left:654px;top:713px;width:20px;height:20px;background:#f3f3f3;border:1px solid #8c8c8c;border-radius:4px"></div><div class="t" style="left:682px;top:716px;height:14px;line-height:14px;font-size:14px;color:#1a1a1a">自动端口控制</div>


<!-- receive / send boxes -->
<div class="a" style="left:930px;top:107px;width:520px;height:553px;background:#fafafa;border:1px solid #e2e2e2;border-bottom:1px solid #8a8a8a;border-radius:4px"></div>
<pre class="a" style="left:941px;top:116px;font-family:'Liberation Mono',monospace;font-size:14.67px;line-height:24px;color:#1a1a1a">{
        "data": {
                "0":    5213456,
                "1":    62345678,
                "2":    723456789,
                "3":    823456789,
                "4":    "24.75",
                "5":    "25.00",
                "6":    "25.00",
                "7":    "26.25",
                "8":    1234567,
                "9":    234567,
                "10":   4213564
        },
        "msg":  "成功",
        "code": 200,
        "ret_cmd":      "get_slave_data",
        "free": 101120
}</pre>
<div class="a" style="left:930px;top:664px;width:520px;height:100px;background:#fafafa;border:1px solid #e2e2e2;border-bottom:1px solid #8a8a8a;border-radius:4px"></div>
<pre class="a" style="left:941px;top:667px;font-family:'Liberation Mono',monospace;font-size:14.67px;line-height:24px;color:#1a1a1a">{"cmd":"get_slave_data"}</pre>
<div class="t" style="left:930px;top:770px;font-size:13.5px;color:#1a1a1a">发送：24</div>
<div class="t" style="left:1229px;top:770px;font-size:13.5px;color:#1a1a1a;word-spacing:1px">接收：276 &nbsp;- &nbsp;276</div>

</body></html>
